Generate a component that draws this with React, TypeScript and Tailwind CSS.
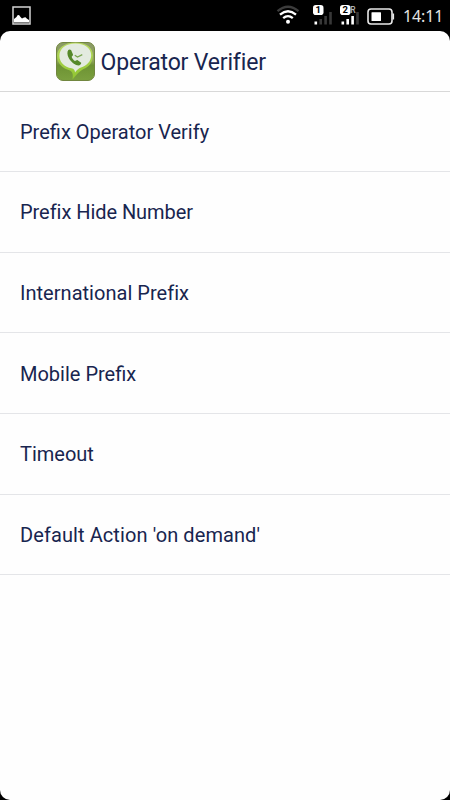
const settings = [
  { label: "Prefix Operator Verify", tracking: "tracking-normal" },
  { label: "Prefix Hide Number", tracking: "tracking-[-0.05px]" },
  { label: "International Prefix", tracking: "tracking-[0.03px]" },
  { label: "Mobile Prefix", tracking: "tracking-normal" },
  { label: "Timeout", tracking: "tracking-normal" },
  { label: "Default Action 'on demand'", tracking: "tracking-[0.09px]" },
];

const PictureIcon = () => (
  <svg width="20" height="20" viewBox="0 0 20 20">
    <rect x="1" y="1" width="17" height="17" fill="#000" stroke="#d4d4d4" strokeWidth="1.5" />
    <path d="M2 16.5V13L4.5 11L5.5 9.2L7 9L8.5 11L10 12.5L12 11.5L13.5 11.2L15 12.8L17 14V16.5Z" fill="#fff" />
  </svg>
);

const WifiIcon = () => (
  <svg width="24" height="20" viewBox="0 0 24 20" fill="none" strokeWidth="2.3">
    <path d="M1.5 6.2Q12 -2.6 22.5 6.2" stroke="#3c3c3c" />
    <path d="M4 9.6Q12 2.8 20 9.6" stroke="#fff" />
    <path d="M7.2 13.2Q12 9 16.8 13.2" stroke="#fff" />
    <circle cx="12" cy="16.8" r="2" fill="#fff" />
  </svg>
);

type SignalIconProps = {
  sim: number;
  level: number;
  roaming?: boolean;
};

const SignalIcon = ({ sim, level, roaming }: SignalIconProps) => (
  <svg width="20" height="20" viewBox="0 0 20 20" fontFamily="Roboto, sans-serif">
    {[3, 5.5, 8.5, 12.5].map((h, i) => (
      <rect key={i} x={1.5 + i * 4.9} y={19.5 - h} width="2.6" height={h} fill={i < level ? "#fff" : "#383838"} />
    ))}
    <rect x="0" y="0" width="10.5" height="10" rx="2.8" fill="#fff" />
    <text x="5.2" y="8.4" fontSize="9.5" fontWeight="700" textAnchor="middle" fill="#000">
      {sim}
    </text>
    {roaming && (
      <text x="10.3" y="8" fontSize="8.5" fontWeight="500" fill="#b4b4b4">
        R
      </text>
    )}
  </svg>
);

const BatteryIcon = () => (
  <svg width="28" height="18" viewBox="0 0 28 18">
    <rect x="1" y="1" width="24" height="15" rx="3" fill="none" stroke="#e8e8e8" strokeWidth="1.6" />
    <rect x="4.5" y="4.3" width="9.5" height="8.6" rx="0.5" fill="#fff" />
    <path d="M26.3 5.5V11.5" stroke="#e8e8e8" strokeWidth="1.6" />
  </svg>
);

const AppLogo = () => (
  <svg width="39" height="39" viewBox="0 0 39 39">
    <defs>
      <linearGradient id="logoBg" x1="0" y1="0" x2="0" y2="1">
        <stop offset="0" stopColor="#8a9a66" />
        <stop offset="0.48" stopColor="#91a35e" />
        <stop offset="0.6" stopColor="#6d9233" />
        <stop offset="1" stopColor="#7ba03f" />
      </linearGradient>
      <linearGradient id="logoRing" x1="0" y1="0" x2="0" y2="1">
        <stop offset="0" stopColor="#b9da62" />
        <stop offset="1" stopColor="#8fc52f" />
      </linearGradient>
    </defs>
    <rect x="0.5" y="0.5" width="38" height="38" rx="6.5" fill="url(#logoBg)" stroke="#71863f" />
    <path
      d="M19.5 0.6C31 0.6 37 6.5 37 13.5C37 20.5 32.5 25 27.5 27C24 28.8 20.5 32.5 16.5 37.5C17.2 33 17 30.2 14 28.5C6.5 26.5 1 21 1 14C1 7 8 0.6 19.5 0.6Z"
      fill="url(#logoRing)"
    />
    <path
      d="M19.5 1.6C29.5 1.6 35.2 7 35.2 13.3C35.2 19.5 30.5 23.8 25 25.5C22.5 26.5 20.8 28 19 30.5C19 28.2 18 26.8 15.5 26.2C8.5 25 3.4 20.3 3.4 13.7C3.4 7 9.5 1.6 19.5 1.6Z"
      fill="#e3ebe0"
    />
    <path
      d="M12.3 8C11 9.8 11 13 13 16.5C15.5 20.5 19.5 23.4 22.5 23.4C24 23.4 25.4 22 25.2 20.7L21.3 17.9C20.3 17.8 19.8 19 18.9 18.9C17.5 18.3 15.9 16.2 15.7 14.8C16 13.8 17.2 13.6 17 12.4L15.2 8.2C14.5 7.3 13 7.2 12.3 8Z"
      fill="#55892a"
    />
    <path d="M18.8 13.2L21.5 15L26.3 12.6" fill="none" stroke="#79a650" strokeWidth="1.3" />
  </svg>
);

const StatusBar = () => (
  <div className="flex h-[31px] shrink-0 items-start pl-3 pr-[7px]">
    <div className="pt-1.5">
      <PictureIcon />
    </div>
    <div className="ml-auto flex items-start">
      <div className="mr-[13px] pt-[5px]">
        <WifiIcon />
      </div>
      <div className="mr-[7px] pt-[5px]">
        <SignalIcon sim={1} level={1} />
      </div>
      <div className="mr-[7px] pt-[5px]">
        <SignalIcon sim={2} level={3} roaming />
      </div>
      <div className="mr-2 pt-2">
        <BatteryIcon />
      </div>
      <span className="w-10 whitespace-nowrap pt-1 font-['Noto_Sans',sans-serif] text-[16px] leading-6 tracking-[-0.1px] text-[#e4e4e4]">
        14:11
      </span>
    </div>
  </div>
);

export default function App() {
  return (
    <div className="flex h-[800px] w-[450px] flex-col overflow-hidden bg-black font-['Roboto',sans-serif] text-[#18254f]">
      <StatusBar />
      <main className="flex-1 overflow-hidden rounded-[10px] bg-[#fefefe]">
        <header className="flex h-[60.6px] items-center gap-[5.5px] border-b border-[#d8d8d8] pl-14 pt-px">
          <AppLogo />
          <h1 className="whitespace-nowrap pt-[3px] text-[23px] leading-8 tracking-[-0.16px]">Operator Verifier</h1>
        </header>
        <ul>
          {settings.map(({ label, tracking }) => (
            <li
              key={label}
              className={`flex h-[80.6px] items-center border-b border-[#e4e5e8] px-5 pt-px text-[20px] ${tracking}`}
            >
              {label}
            </li>
          ))}
        </ul>
      </main>
    </div>
  );
}
